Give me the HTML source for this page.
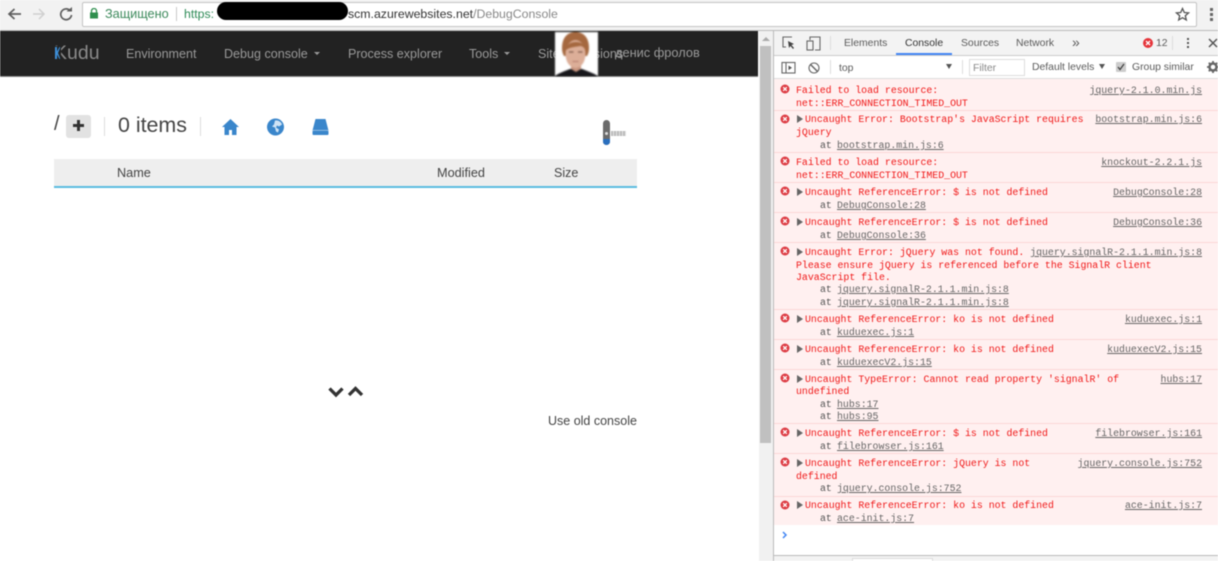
<!DOCTYPE html>
<html lang="ru">
<head>
<meta charset="utf-8">
<title>Kudu DebugConsole</title>
<style>
html,body{margin:0;padding:0;width:1218px;height:561px;overflow:hidden;background:#fff}
#r{position:relative;width:1218px;height:561px;overflow:hidden;filter:blur(.45px);font-family:"Liberation Sans","Noto Sans CJK JP",sans-serif}
#r div,#r span.a,#r svg{position:absolute}
.t{position:absolute;white-space:nowrap}
.n{color:#9a9a9a;font-size:12.55px;top:47px}
.d{color:#5a5a5a;font-size:10.4px;white-space:nowrap;position:absolute}
.m{position:absolute;white-space:pre;font:9.9px/12px "Liberation Mono",monospace;color:#f01818;margin-top:1px}
.l{position:absolute;white-space:pre;font:9.9px/12px "Liberation Mono",monospace;color:#666;text-decoration:underline;margin-top:1px}
.at{position:absolute;white-space:pre;font:9.9px/12px "Liberation Mono",monospace;color:#555;margin-top:1px}
.rl{right:16px}
.sep{position:absolute;left:774px;width:444px;height:1px;background:#fbd7d7}
.tri{position:absolute;width:0;height:0;border-left:6px solid #666;border-top:4px solid transparent;border-bottom:4px solid transparent;left:797px}
</style>
</head>
<body>
<div id="r">
<!-- browser bar -->
<div style="left:0;top:0;width:1218px;height:30px;background:#f2f2f2"></div>
<div style="left:82px;top:2px;width:1113px;height:23px;background:#fff;border:1px solid #c4c4c4;border-radius:2px"></div>
<svg style="left:6px;top:6px" width="72" height="18" viewBox="0 0 72 18" fill="none"><path d="M15 8H3M8.500 3L3 8l5.500 5" stroke="#5f5f5f" stroke-width="1.700"/><path d="M27 8h11M33 3l5 5-5 5" stroke="#d0d0d0" stroke-width="1.500"/><path d="M64 4.500A5.400 5.400 0 1 0 65.500 9" stroke="#5f5f5f" stroke-width="1.700"/><path d="M60.500 4.500H66V0z" fill="#5f5f5f" transform="translate(0 1)"/></svg>
<svg style="left:89px;top:8px" width="10" height="11" viewBox="0 0 10 11"><path d="M2.500 4.500V3a2.500 2.500 0 0 1 5 0v1.500" fill="none" stroke="#2f8f4e" stroke-width="1.300"/><rect x="1" y="4.500" width="8" height="6" fill="#2f8f4e"/></svg>
<span class="t" style="left:105px;top:7px;font-size:12.700px;color:#3d8a5c">Защищено</span>
<div style="left:176px;top:7px;width:1px;height:14px;background:#c8c8c8"></div>
<span class="t" style="left:184px;top:7px;font-size:12.300px;color:#2e8b57">https:</span>
<div style="left:217px;top:2px;width:131px;height:18px;background:#000;border-radius:9px"></div>
<span class="t" style="left:348px;top:7px;font-size:12.300px;color:#333">scm.azurewebsites.net<span style="color:#888">/DebugConsole</span></span>
<svg style="left:1175px;top:7px" width="15" height="15" viewBox="0 0 15 15"><path d="M7.500 1.500l1.800 4 4.200.4-3.200 2.800 1 4.200-3.800-2.200-3.800 2.200 1-4.200L1.500 5.900l4.200-.4z" fill="none" stroke="#555" stroke-width="1.300"/></svg>
<div style="left:1210px;top:8px;width:3px;height:3px;background:#666"></div>
<div style="left:1210px;top:13px;width:3px;height:3px;background:#666"></div>
<div style="left:1210px;top:18px;width:3px;height:3px;background:#666"></div>
<div style="left:0;top:30px;width:1218px;height:1px;background:#bbb"></div>

<!-- kudu nav -->
<div style="left:0;top:31px;width:758px;height:45px;background:#222"></div>
<div style="left:0;top:76px;width:758px;height:1px;background:#888"></div>
<span class="t" style="left:54px;top:42px;font-size:19.500px;color:#8a8a8a">Kudu</span>
<svg style="left:54px;top:46px" width="7" height="14" viewBox="0 0 7 14"><rect width="7" height="14" fill="#222"/><path d="M1 1h2v4.500L5.500 1H6v1L4 7l2 5v1H5.500L3 8.500V13H1z" fill="#3d8fd8"/></svg>
<span class="t n" style="left:126px">Environment</span>
<span class="t n" style="left:224px">Debug console</span>
<div style="left:314px;top:52px;width:0;height:0;border-left:3.500px solid transparent;border-right:3.500px solid transparent;border-top:3.500px solid #9a9a9a"></div>
<span class="t n" style="left:348px">Process explorer</span>
<span class="t n" style="left:469px">Tools</span>
<div style="left:504px;top:52px;width:0;height:0;border-left:3.500px solid transparent;border-right:3.500px solid transparent;border-top:3.500px solid #9a9a9a"></div>
<span class="t n" style="left:538px">Site extensions</span>
<svg style="left:555px;top:32px;filter:blur(.7px)" width="43" height="44" viewBox="0 0 43 44"><rect width="43" height="44" fill="#fff"/><path d="M0 44c4-3 10-5 15-7h12c5 2 11 4 16 7z" fill="#17171b"/><path d="M16 30h10v7l-5 3-5-3z" fill="#c99680"/><path d="M7 16C7 5 13 0 20.500 0S34 5 34 16c0 4-1 6-2 8H9c-1-2-2-4-2-8z" fill="#a5683f"/><ellipse cx="20.500" cy="22" rx="10" ry="14" fill="#dcae98"/><path d="M10 19c1-6 5-9 11-9s9 3 10 9c-2-4-4-5-6-5-5 1-11 1-15 5z" fill="#a5683f"/><path d="M14 20h4.500M23 20h4.500" stroke="#7d5a4a" stroke-width="1.200"/><path d="M17.500 29.500h6" stroke="#b98373" stroke-width="1.200"/></svg>
<span class="t n" style="left:615px;top:45px;font-size:12.800px">денис фролов</span>

<!-- page content -->
<span class="t" style="left:54px;top:113px;font-size:20px;color:#444">/</span>
<div style="left:66px;top:115px;width:25px;height:23px;background:#e2e2e2;border-radius:3px"></div>
<div style="left:73px;top:124px;width:11px;height:3px;background:#333"></div>
<div style="left:77px;top:120px;width:3px;height:11px;background:#333"></div>
<div style="left:104px;top:117px;width:1px;height:19px;background:#ddd"></div>
<span class="t" style="left:118px;top:113px;font-size:21.400px;color:#444">0 items</span>
<div style="left:200px;top:117px;width:1px;height:19px;background:#ddd"></div>
<svg style="left:221px;top:118px" width="19" height="18" viewBox="0 0 19 18"><path d="M9.500 1L1 9h2.500v8h4.500v-5h3v5h4.500V9H18z" fill="#3a86cb"/></svg>
<svg style="left:266px;top:118px" width="19" height="18" viewBox="0 0 19 18"><circle cx="9.500" cy="9" r="8.500" fill="#3a86cb"/><path d="M9 2.500c3-.5 6 1 7 4l-3 2-2-1-1 2 3 2-1 3-2-1-1-4-3-1 2-2z" fill="#cfe3f5"/></svg>
<svg style="left:312px;top:118px" width="17" height="18" viewBox="0 0 17 18"><path d="M3.500 1h10l3 11.500H.5z" fill="#3a86cb"/><rect x="0.500" y="12.500" width="16" height="4.500" rx="1" fill="#3a86cb"/><path d="M0 12.300h17" stroke="#bcd8f0" stroke-width=".6"/></svg>
<div style="left:603px;top:120px;width:7px;height:25px;background:#6b6b6b;border-radius:4px"></div>
<div style="left:603px;top:139px;width:7px;height:6px;background:#2a6fbe;border-radius:0 0 4px 4px"></div>
<div style="left:605px;top:132px;width:3px;height:3px;background:#ddd;border-radius:2px"></div>
<div style="left:611px;top:131px;width:15px;height:5px;background:repeating-linear-gradient(90deg,#bbb 0 2px,#e2e2e2 2px 3px)"></div>
<div style="left:54px;top:159px;width:583px;height:27px;background:#eee"></div>
<div style="left:54px;top:186px;width:583px;height:2px;background:#5bbce0"></div>
<span class="t" style="left:117px;top:166px;font-size:12.700px;color:#444">Name</span>
<span class="t" style="left:437px;top:166px;font-size:12.700px;color:#444">Modified</span>
<span class="t" style="left:554px;top:166px;font-size:12.500px;color:#444">Size</span>
<svg style="left:328px;top:386px" width="36" height="12" viewBox="0 0 36 12" fill="none" stroke="#333" stroke-width="3.300"><path d="M1.500 2.500L8 9l6.500-6.500M21 9l6.500-6.500L34 9"/></svg>
<span class="t" style="left:548px;top:414px;font-size:12.500px;color:#444">Use old console</span>

<!-- scrollbar -->
<div style="left:759px;top:31px;width:14px;height:530px;background:#f1f1f1"></div>
<div style="left:760px;top:46px;width:11px;height:397px;background:#c0c0c0"></div>
<div style="left:762px;top:37px;width:0;height:0;border-left:4px solid transparent;border-right:4px solid transparent;border-bottom:4px solid #aaa"></div>

<!-- devtools -->
<div style="left:773px;top:31px;width:1px;height:530px;background:#bbb"></div>
<div style="left:774px;top:31px;width:444px;height:24px;background:#f3f3f3"></div>
<div style="left:774px;top:55px;width:444px;height:1px;background:#ccc"></div>
<div style="left:774px;top:56px;width:444px;height:23px;background:#fff"></div>
<div style="left:774px;top:78px;width:444px;height:1px;background:#ddd"></div>
<svg style="left:782px;top:36px" width="40" height="15" viewBox="0 0 40 15" fill="none" stroke="#666" stroke-width="1.100"><path d="M10 1H1v10h3"/><path d="M6 5l6 3-2.500 1L12 12l-1 1-2.500-3L7 12z" fill="#444" stroke="none"/><rect x="25" y="5" width="6" height="9"/><path d="M28 4V1h10v13h-5"/></svg>
<div style="left:830px;top:36px;width:1px;height:14px;background:#ddd"></div>
<span class="d" style="left:844px;top:38px">Elements</span>
<span class="d" style="left:905px;top:38px;color:#333">Console</span>
<div style="left:896px;top:53px;width:56px;height:2px;background:#4285f4"></div>
<span class="d" style="left:961px;top:38px">Sources</span>
<span class="d" style="left:1016px;top:38px">Network</span>
<span class="d" style="left:1072px;top:34px;font-size:14px">»</span>
<svg style="left:1143px;top:38px" width="10" height="10" viewBox="0 0 10 10"><circle cx="5" cy="5" r="5" fill="#e5343a"/><path d="M3 3l4 4M7 3L3 7" stroke="#fff" stroke-width="1.300"/></svg>
<span class="d" style="left:1156px;top:38px">12</span>
<div style="left:1172px;top:36px;width:1px;height:14px;background:#ddd"></div>
<div style="left:1187px;top:38px;width:2px;height:2px;background:#555"></div>
<div style="left:1187px;top:42px;width:2px;height:2px;background:#555"></div>
<div style="left:1187px;top:46px;width:2px;height:2px;background:#555"></div>
<svg style="left:1208px;top:38px" width="10" height="10" viewBox="0 0 10 10"><path d="M1 1l8 8M9 1L1 9" stroke="#555" stroke-width="1.500"/></svg>

<svg style="left:781px;top:61px" width="42" height="14" viewBox="0 0 42 14" fill="none" stroke="#666" stroke-width="1.100"><rect x="1" y="1.500" width="13" height="10.500"/><path d="M5 2v10"/><path d="M7.500 4.500l3.500 2.300-3.500 2.300z" fill="#555" stroke="none"/><circle cx="33" cy="7" r="5"/><path d="M29.500 3.500l7 7" stroke-width="1.500"/></svg>
<div style="left:830px;top:60px;width:1px;height:14px;background:#ddd"></div>
<span class="d" style="left:839px;top:62.500px">top</span>
<div style="left:946px;top:64px;width:0;height:0;border-left:3.500px solid transparent;border-right:3.500px solid transparent;border-top:5px solid #555"></div>
<div style="left:962px;top:60px;width:1px;height:14px;background:#ddd"></div>
<div style="left:969px;top:59px;width:54px;height:15px;border:1px solid #ddd"></div>
<span class="d" style="left:973px;top:62.500px;color:#888">Filter</span>
<span class="d" style="left:1032px;top:62px">Default levels</span>
<div style="left:1099px;top:64px;width:0;height:0;border-left:3.500px solid transparent;border-right:3.500px solid transparent;border-top:5px solid #555"></div>
<div style="left:1116px;top:62px;width:10px;height:10px;background:#ccc;border-radius:1px"></div>
<svg style="left:1116px;top:62px" width="10" height="10" viewBox="0 0 10 10"><path d="M2 5l2 2.500L8 2" fill="none" stroke="#444" stroke-width="1.300"/></svg>
<span class="d" style="left:1132px;top:62px">Group similar</span>
<svg style="left:1206px;top:60px" width="12" height="14" viewBox="0 0 12 14"><circle cx="7" cy="7" r="3.500" fill="none" stroke="#666" stroke-width="2.500"/><path d="M7 1v2M7 11v2M1 7h2M11 7h1M2.800 2.800l1.400 1.400M9.800 9.800l1.400 1.400M2.800 11.200l1.400-1.400M9.800 4.200l1.400-1.400" stroke="#666" stroke-width="1.800"/></svg>

<!-- messages -->
<div style="left:774px;top:79px;width:444px;height:446px;background:#fff0f0"></div>
<div class="sep" style="top:110px"></div>
<div class="sep" style="top:152px"></div>
<div class="sep" style="top:182px"></div>
<div class="sep" style="top:212px"></div>
<div class="sep" style="top:242px"></div>
<div class="sep" style="top:309px"></div>
<div class="sep" style="top:339px"></div>
<div class="sep" style="top:369px"></div>
<div class="sep" style="top:423px"></div>
<div class="sep" style="top:453px"></div>
<div class="sep" style="top:496px"></div>

<svg style="left:780px;top:84px" width="10" height="440" viewBox="0 0 10 440">
<defs><g id="e"><circle cx="5" cy="5" r="4.500" fill="#dd3c44"/><path d="M3.200 3.200l3.600 3.600M6.800 3.200L3.200 6.800" stroke="#fff" stroke-width="1.300"/></g></defs>
<use href="#e" y="0"/><use href="#e" y="30"/><use href="#e" y="72"/><use href="#e" y="102"/><use href="#e" y="132"/><use href="#e" y="162"/><use href="#e" y="229"/><use href="#e" y="259"/><use href="#e" y="289"/><use href="#e" y="343"/><use href="#e" y="373"/><use href="#e" y="416"/>
</svg>

<div class="tri" style="top:115px"></div>
<div class="tri" style="top:188px"></div>
<div class="tri" style="top:218px"></div>
<div class="tri" style="top:248px"></div>
<div class="tri" style="top:315px"></div>
<div class="tri" style="top:345px"></div>
<div class="tri" style="top:375px"></div>
<div class="tri" style="top:429px"></div>
<div class="tri" style="top:459px"></div>
<div class="tri" style="top:501px"></div>

<span class="m" style="left:796px;top:84px">Failed to load resource:</span>
<span class="m" style="left:796px;top:97px">net::ERR_CONNECTION_TIMED_OUT</span>
<span class="l rl" style="top:84px">jquery-2.1.0.min.js</span>

<span class="m" style="left:805px;top:113px">Uncaught Error: Bootstrap's JavaScript requires</span>
<span class="m" style="left:796px;top:126px">jQuery</span>
<span class="at" style="left:820px;top:139px">at </span><span class="l" style="left:837px;top:139px">bootstrap.min.js:6</span>
<span class="l rl" style="top:113px">bootstrap.min.js:6</span>

<span class="m" style="left:796px;top:156px">Failed to load resource:</span>
<span class="m" style="left:796px;top:169px">net::ERR_CONNECTION_TIMED_OUT</span>
<span class="l rl" style="top:156px">knockout-2.2.1.js</span>

<span class="m" style="left:805px;top:186px">Uncaught ReferenceError: $ is not defined</span>
<span class="at" style="left:820px;top:199px">at </span><span class="l" style="left:837px;top:199px">DebugConsole:28</span>
<span class="l rl" style="top:186px">DebugConsole:28</span>

<span class="m" style="left:805px;top:216px">Uncaught ReferenceError: $ is not defined</span>
<span class="at" style="left:820px;top:229px">at </span><span class="l" style="left:837px;top:229px">DebugConsole:36</span>
<span class="l rl" style="top:216px">DebugConsole:36</span>

<span class="m" style="left:805px;top:246px">Uncaught Error: jQuery was not found.</span>
<span class="m" style="left:796px;top:259px">Please ensure jQuery is referenced before the SignalR client</span>
<span class="m" style="left:796px;top:271px">JavaScript file.</span>
<span class="at" style="left:820px;top:283px">at </span><span class="l" style="left:837px;top:283px">jquery.signalR-2.1.1.min.js:8</span>
<span class="at" style="left:820px;top:296px">at </span><span class="l" style="left:837px;top:296px">jquery.signalR-2.1.1.min.js:8</span>
<span class="l rl" style="top:246px">jquery.signalR-2.1.1.min.js:8</span>

<span class="m" style="left:805px;top:313px">Uncaught ReferenceError: ko is not defined</span>
<span class="at" style="left:820px;top:326px">at </span><span class="l" style="left:837px;top:326px">kuduexec.js:1</span>
<span class="l rl" style="top:313px">kuduexec.js:1</span>

<span class="m" style="left:805px;top:343px">Uncaught ReferenceError: ko is not defined</span>
<span class="at" style="left:820px;top:356px">at </span><span class="l" style="left:837px;top:356px">kuduexecV2.js:15</span>
<span class="l rl" style="top:343px">kuduexecV2.js:15</span>

<span class="m" style="left:805px;top:373px">Uncaught TypeError: Cannot read property 'signalR' of</span>
<span class="m" style="left:796px;top:385px">undefined</span>
<span class="at" style="left:820px;top:398px">at </span><span class="l" style="left:837px;top:398px">hubs:17</span>
<span class="at" style="left:820px;top:410px">at </span><span class="l" style="left:837px;top:410px">hubs:95</span>
<span class="l rl" style="top:373px">hubs:17</span>

<span class="m" style="left:805px;top:427px">Uncaught ReferenceError: $ is not defined</span>
<span class="at" style="left:820px;top:440px">at </span><span class="l" style="left:837px;top:440px">filebrowser.js:161</span>
<span class="l rl" style="top:427px">filebrowser.js:161</span>

<span class="m" style="left:805px;top:457px">Uncaught ReferenceError: jQuery is not</span>
<span class="m" style="left:796px;top:470px">defined</span>
<span class="at" style="left:820px;top:482px">at </span><span class="l" style="left:837px;top:482px">jquery.console.js:752</span>
<span class="l rl" style="top:457px">jquery.console.js:752</span>

<span class="m" style="left:805px;top:499px">Uncaught ReferenceError: ko is not defined</span>
<span class="at" style="left:820px;top:512px">at </span><span class="l" style="left:837px;top:512px">ace-init.js:7</span>
<span class="l rl" style="top:499px">ace-init.js:7</span>

<svg style="left:782px;top:531px" width="6" height="8" viewBox="0 0 6 8"><path d="M1 1l3 3-3 3" fill="none" stroke="#4285f4" stroke-width="1.500"/></svg>

<div style="left:774px;top:555px;width:444px;height:6px;background:#f3f3f3;border-top:1px solid #bbb"></div>
<div style="left:852px;top:558px;width:79px;height:3px;background:#fff;border:1px solid #ddd;border-bottom:0"></div>
</div>
</body>
</html>
